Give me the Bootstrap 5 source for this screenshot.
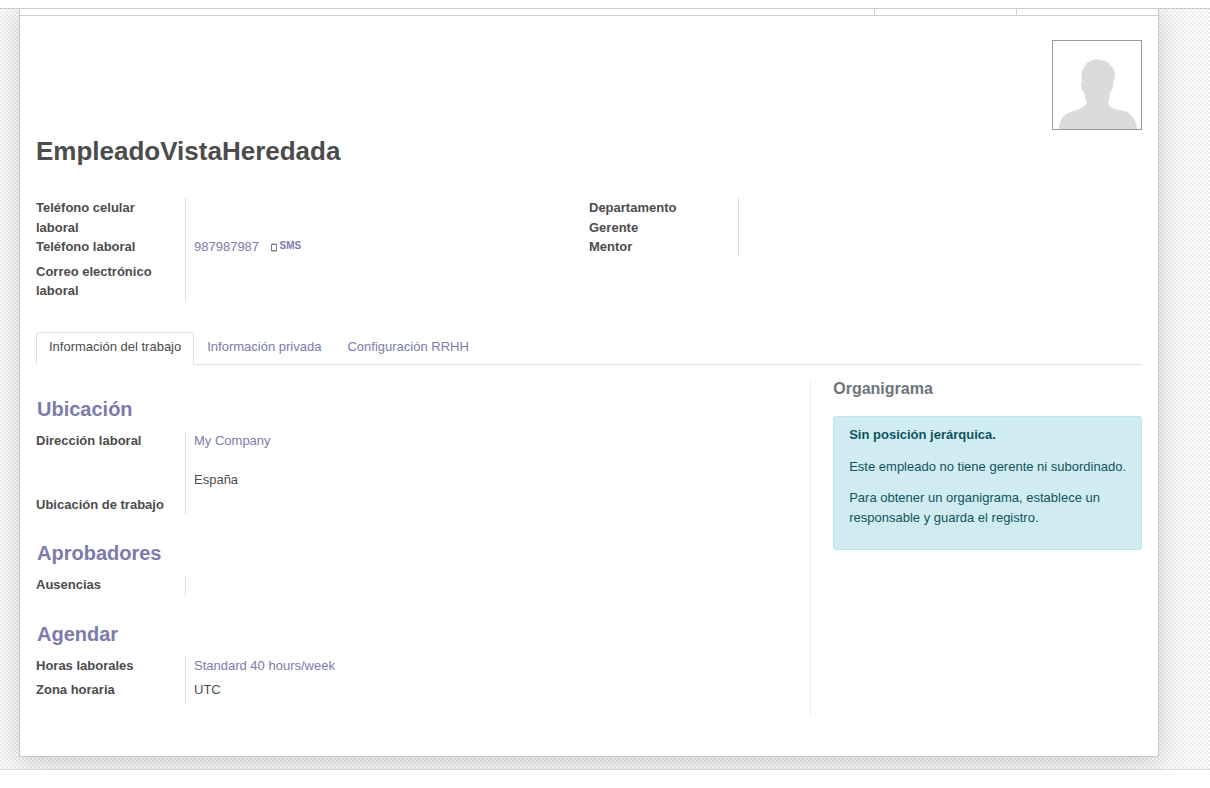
<!DOCTYPE html>
<html lang="es">
<head>
<meta charset="utf-8">
<meta name="viewport" content="width=device-width, initial-scale=1">
<title>EmpleadoVistaHeredada</title>
<link href="https://cdn.jsdelivr.net/npm/bootstrap@5.3.0/dist/css/bootstrap.min.css" rel="stylesheet">
<style>
body{font-family:"Liberation Sans",Arial,sans-serif;font-size:13px;line-height:1.5;color:#4c4c4c;background:#fff}
a{color:#7c7bad;text-decoration:none}
.topstrip{height:9px;background:#fff;border-bottom:1px solid #ccc;z-index:2}
.form-bg{padding:0 51px 12px 19px;border-bottom:1px solid #ddd;background:repeating-conic-gradient(#eaeaea 0 25%,#fff 0 50%) 0 1px/4px 4px}
.sheet{border:1px solid #c8c8d3;border-top:0;background:#fff;box-shadow:0 5px 24px rgba(0,0,0,.17)}
.statbox{height:7px;border-bottom:1px solid #ced4da}
.statbox div{width:142px;border-left:1px solid #ced4da}
.sheet-body{padding:24px 16px 41px}
.avatar{width:90px;height:90px;border:1px solid #999}
.sheet h1{font-size:26px;font-weight:700;line-height:32px;margin:5px 0 31px}
.sheet h2{font-size:20px;font-weight:700;line-height:24px;color:#7c7bad;margin:0 0 10px;padding-left:1px}
.sheet h3{font-size:16px;font-weight:700;line-height:20px;color:#6c757d;margin:-2px 0 17px}
.fields{margin:0}
.fields dt{width:150px;padding-right:20px;border-right:1px solid #ddd;flex:none}
.fields dd{margin:0;padding-left:8px}
.fields .roomy dt,.fields .roomy dd{padding-bottom:5px}
.sms{margin-left:8px;font-size:10px;vertical-align:2px;line-height:1}
.nav-tabs{margin-top:31px}
.nav-tabs .nav-link{padding:4px 12px 8px;border-radius:3px 3px 0 0;color:#7c7bad}
.nav-tabs .nav-link.active{color:#4c4c4c}
.pane{padding-top:16px}
.job{padding-top:16px}
.job section{margin-bottom:27px}
.job section:last-child{margin-bottom:10px}
.chart{width:30%;border-left:1px solid #e9ecef;padding-left:22px}
.alert-org{background:#d1ecf1;border:1px solid #bee5eb;color:#0c5460;border-radius:3px;padding:8px 15px 10px;margin:0}
.alert-org p{margin:0 0 12px}
</style>
</head>
<body>
<div class="topstrip position-relative"></div>
<main class="form-bg">
<div class="sheet">
<div class="statbox d-flex justify-content-end"><div></div><div></div></div>
<div class="sheet-body">
<div class="d-flex justify-content-end">
<svg class="avatar" viewBox="0 0 88 88" role="img" aria-label="Foto del empleado"><path fill="#dbdbdb" d="M6 88C6 79 12 71 21 70C26 68 32 66 34 62C32 58 32 54 31 51C28 49 28 46 28 42L29 41C27 31 31 23 37 20C41 18 47 18 51 20C54 20 55 21 57 24C62 28 63 33 61 39L60 42C60 46 60 50 57 51C57 55 56 59 55 62C57 67 62 68 66 69C75 69 83 76 84 88Z"/></svg>
</div>
<h1>EmpleadoVistaHeredada</h1>
<div class="row g-0">
<div class="col-6"><dl class="fields">
<div class="d-flex"><dt>Teléfono celular laboral</dt><dd></dd></div>
<div class="d-flex roomy"><dt>Teléfono laboral</dt><dd><a href="#tel">987987987</a> <a href="#sms" class="sms fw-bold"><svg width="6" height="9" viewBox="0 0 6 9" style="vertical-align:-3px" aria-hidden="true"><path d="M.5 1v7h5V1z" fill="none" stroke="#7c7bad"/><path d="M0 1.500h6M0 7.500h6" stroke="#7c7bad"/></svg> SMS</a></dd></div>
<div class="d-flex"><dt>Correo electrónico laboral</dt><dd></dd></div>
</dl></div>
<div class="col-6"><dl class="fields">
<div class="d-flex"><dt>Departamento</dt><dd></dd></div>
<div class="d-flex"><dt>Gerente</dt><dd></dd></div>
<div class="d-flex"><dt>Mentor</dt><dd></dd></div>
</dl></div>
</div>
<ul class="nav nav-tabs" role="tablist">
<li class="nav-item"><a class="nav-link active" href="#trabajo" role="tab" aria-selected="true">Información del trabajo</a></li>
<li class="nav-item"><a class="nav-link" href="#privada" role="tab">Información privada</a></li>
<li class="nav-item"><a class="nav-link" href="#rrhh" role="tab">Configuración RRHH</a></li>
</ul>
<div class="pane d-flex" id="trabajo">
<div class="job flex-grow-1">
<section><h2>Ubicación</h2><dl class="fields">
<div class="d-flex roomy"><dt>Dirección laboral</dt><dd><a href="#company">My Company</a><br><br>España</dd></div>
<div class="d-flex"><dt>Ubicación de trabajo</dt><dd></dd></div>
</dl></section>
<section><h2>Aprobadores</h2><dl class="fields">
<div class="d-flex"><dt>Ausencias</dt><dd></dd></div>
</dl></section>
<section><h2>Agendar</h2><dl class="fields">
<div class="d-flex roomy"><dt>Horas laborales</dt><dd><a href="#horas">Standard 40 hours/week</a></dd></div>
<div class="d-flex roomy"><dt>Zona horaria</dt><dd>UTC</dd></div>
</dl></section>
</div>
<aside class="chart">
<h3>Organigrama</h3>
<div class="alert alert-org" role="alert">
<p class="fw-bold">Sin posición jerárquica.</p>
<p>Este empleado no tiene gerente ni subordinado.</p>
<p>Para obtener un organigrama, establece un responsable y guarda el registro.</p>
</div>
</aside>
</div>
</div>
</div>
</main>
<script src="https://cdn.jsdelivr.net/npm/bootstrap@5.3.0/dist/js/bootstrap.bundle.min.js"></script>
</body>
</html>
